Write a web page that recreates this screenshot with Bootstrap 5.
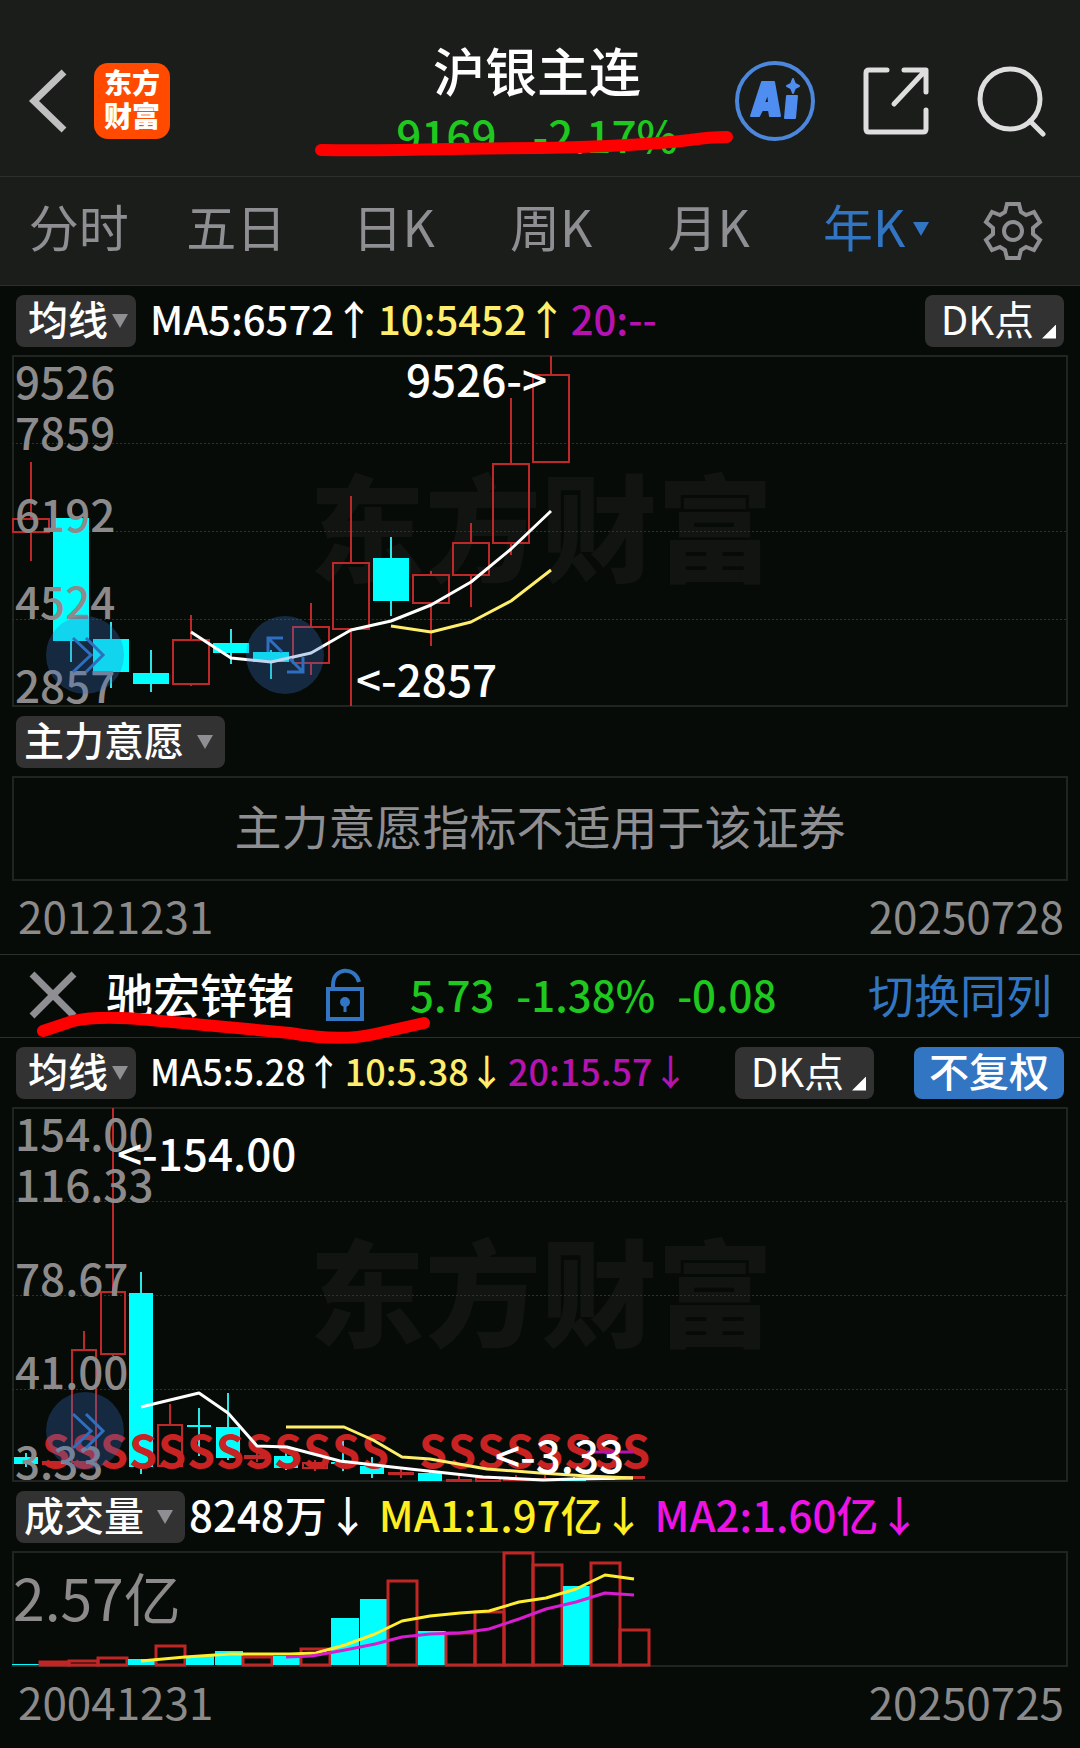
<!DOCTYPE html>
<html lang="zh-CN">
<head>
<meta charset="utf-8">
<meta name="viewport" content="width=device-width, initial-scale=1">
<title>沪银主连 - 年K</title>
<link href="https://cdn.jsdelivr.net/npm/bootstrap@5.3.0/dist/css/bootstrap.min.css" rel="stylesheet">
<style>
  :root { --page:#060b07; --bar:#1a1d1a; --rule:#2c2f2c; --frame:#212421; --muted:#8e8e93; --axis:#8c8a8a;
          --chip:#323232; --blue:#3275c3; --fall:#1fc81f; --gold:#ffee6b; --violet:#b612b0; }
  body { background:var(--page); color:#fff; font-family:"Noto Sans CJK SC","Noto Sans",sans-serif; line-height:1.2; }
  svg { display:block; }
  .bar { background:var(--bar); border-bottom:1px solid var(--rule); }
  .topbar { display:grid; grid-template-columns:1fr auto 1fr; align-items:center; height:177px; padding:25px 34px 0 28px; }
  .plain { background:none; border:0; padding:0; color:inherit; }
  .app-logo { width:76px; height:76px; margin-left:26px; border-radius:14px; background:#ff4a00; font-size:28px; line-height:33px; font-weight:900; padding-top:3px; }
  .app-logo span { display:block; text-align:center; }
  .share { margin:0 46px; }
  .quote-name { font-size:52px; line-height:60px; font-weight:500; margin:0; }
  .quote-block { padding-bottom:4px; }
  .quote-val { font-size:44px; line-height:48px; font-weight:500; color:var(--fall); gap:36px; margin-top:10px; white-space:nowrap; }
  .period { display:grid; grid-template-columns:repeat(6,1fr) 135px; align-items:center; height:109px; font-size:50px; line-height:60px; }
  .period a { color:var(--muted); text-decoration:none; text-align:center; padding-bottom:12px; }
  .period a.on { color:var(--blue); padding-left:20px; }
  .period .gearcell { color:var(--muted); }
  .tools { height:69px; padding:0 16px; white-space:nowrap; }
  .chip { height:52px; border:0; border-radius:8px; background:var(--chip); color:#fff; font-size:40px; line-height:48px; font-weight:500; padding:0 8px; display:flex; align-items:center; }
  .chip > span:first-child { padding-bottom:5px; }
  .chip.dk { font-weight:400; }
  .chip.adjust { background:var(--blue); padding:0 15px 5px; margin-left:40px; }
  .chip .wide { margin-right:13px; }
  .tri { width:0; height:0; border:8px solid transparent; border-top:14px solid currentColor; border-bottom:0; }
  .chip .tri { color:var(--muted); }
  .corner { width:14px; height:14px; background:#fff; clip-path:polygon(100% 0,100% 100%,0 100%); align-self:flex-end; margin-bottom:8px; }
  .ma { font-size:40px; font-weight:500; line-height:48px; gap:4px; padding-bottom:5px; margin-left:14px; }
  .ma.tight { font-size:36px; gap:3px; }
  .ma.vol { font-size:42px; gap:10px; margin-left:4px; }
  .gold { color:var(--gold); } .violet { color:var(--violet); }
  .yel { color:#ffee20; } .mag { color:#ee12e4; }
  .plot { padding:0 12px; }
  .plot svg { width:100%; height:auto; overflow:visible; }
  .notice { height:105px; margin:0 12px; padding-bottom:6px; border:2px solid var(--frame); color:var(--muted); font-size:47px; }
  .dates { height:73px; padding:0 16px 6px 18px; font-size:44px; line-height:48px; color:var(--axis); }
  .pair { height:84px; border-top:1px solid var(--rule); border-bottom:1px solid var(--rule); padding:0 28px 2px; }
  .pair .nm { font-size:47px; line-height:56px; font-weight:500; padding-bottom:4px; }
  .pair .num { font-size:42px; line-height:48px; font-weight:500; color:var(--fall); gap:22px; padding-bottom:3px; }
  .pair .lock { margin-right:42px; }
  .pair a { font-size:46px; line-height:56px; color:var(--blue); text-decoration:none; padding-bottom:4px; }
  .marker { position:absolute; left:0; top:0; width:100%; height:100%; overflow:visible; pointer-events:none; }
  .marker path { fill:none; stroke:#f00; stroke-width:12; stroke-linecap:round; stroke-linejoin:round; }
  .axis { font-size:44px; fill:var(--axis); font-weight:500; }
  .axis.big { font-size:57px; font-weight:400; }
  .note { font-size:44px; fill:#fff; font-weight:500; }
  .wm { font-size:116px; font-weight:900; fill:#111411; text-anchor:middle; }
  .sig { font-size:45px; font-weight:700; fill:#c92222; text-anchor:middle; }
  .grid-line { stroke:#2e312e; stroke-width:1; stroke-dasharray:2 2; }
  .outline { fill:none; stroke:var(--frame); stroke-width:2; }
  .up { fill:none; stroke:#bd2828; stroke-width:2; }
  .down { fill:#00ffff; stroke:#2ee5e5; stroke-width:2; }
  .down rect { stroke:none; }
  .line { fill:none; stroke-width:3; stroke-linejoin:round; }
  .pad { fill:rgba(56,112,200,.3); }
  .glyph { fill:none; stroke:#2f6fc0; stroke-width:3; }
</style>
</head>
<body>
<header class="bar topbar position-relative">
  <div class="d-flex align-items-center">
    <button class="plain" type="button" aria-label="返回">
      <svg width="40" height="64" viewBox="0 0 40 64" fill="none" stroke="#c0c0c0" stroke-width="7"><path d="M36 3 6 32l30 29"/></svg>
    </button>
    <div class="app-logo"><span>东方</span><span>财富</span></div>
  </div>
  <div class="quote-block d-flex flex-column align-items-center">
    <h1 class="quote-name">沪银主连</h1>
    <div class="quote-val d-flex"><span>9169</span><span>-2.17%</span></div>
  </div>
  <div class="d-flex align-items-center justify-content-end">
    <button class="plain" type="button" aria-label="Ai">
      <svg width="82" height="84" viewBox="0 0 82 84"><circle cx="41" cy="42" r="38" fill="none" stroke="#4d87dc" stroke-width="4"/>
        <g fill="#4f8df0" stroke="#4f8df0" stroke-width="2" stroke-linejoin="round"><path fill-rule="evenodd" d="M28 23h12l6 34h-10l-1-6h-7l-3 6h-8zm6 10-4 11h5z"/><path d="m53 37 10 0-2 22h-10zM59 20l2 5 4 2-4 2-2 5-2-5-4-2 4-2z"/></g></svg>
    </button>
    <button class="plain share" type="button" aria-label="分享">
      <svg width="68" height="70" viewBox="0 0 68 70" fill="none" stroke="#dedede" stroke-width="5" stroke-linecap="round" stroke-linejoin="round"><path d="M25 4H7Q4 4 4 7v56q0 3 3 3h54q3 0 3-3V44M42 4h22v22M62 6 32 38"/></svg>
    </button>
    <button class="plain" type="button" aria-label="搜索">
      <svg width="70" height="72" viewBox="0 0 70 72" fill="none" stroke="#dedede" stroke-width="5" stroke-linecap="round"><circle cx="34" cy="34" r="30"/><path d="m54 56 13 13"/></svg>
    </button>
  </div>
  <svg class="marker" viewBox="0 0 1080 176" aria-hidden="true"><path d="M321 150Q370 151 450 149L540 148Q640 146 690 140 710 137 727 137"/></svg>
</header>

<nav class="bar period">
  <a href="#">分时</a>
  <a href="#">五日</a>
  <a href="#">日K</a>
  <a href="#">周K</a>
  <a href="#">月K</a>
  <a class="on d-flex align-items-center justify-content-center" href="#">年K<span class="tri ms-2 mt-2"></span></a>
  <button class="plain gearcell d-flex justify-content-center" type="button" aria-label="设置">
    <svg width="60" height="60" viewBox="-30 -30 60 60" fill="none" stroke="currentColor" stroke-width="4"><circle cy="0" r="9"/>
      <path d="M-6-27H6L8-19 13-16 21-19 27-9 20-3V3L27 9 21 19 13 16 8 19 6 27H-6L-8 19-13 16-21 19-27 9-20 3V-3L-27-9-21-19-13-16-8-19Z"/></svg>
  </button>
</nav>

<main>
  <section>
    <div class="tools d-flex align-items-center">
      <button class="chip" type="button"><span class="ms-1 me-1">均线</span><span class="tri"></span></button>
      <div class="ma d-flex"><span>MA5:6572↑</span><span class="gold">10:5452↑</span><span class="violet">20:--</span></div>
      <button class="chip dk ms-auto" type="button"><span class="ms-1 me-2 ps-1">DK点</span><span class="corner"></span></button>
    </div>
    <div class="plot"><svg id="k1" viewBox="12 355 1056 352" role="img" aria-label="沪银主连年K线"></svg></div>
    <div class="tools d-flex align-items-center">
      <button class="chip" type="button"><span class="wide">主力意愿</span><span class="tri me-1"></span></button>
    </div>
    <div class="notice d-flex align-items-center justify-content-center">主力意愿指标不适用于该证券</div>
    <div class="dates d-flex align-items-center justify-content-between"><span>20121231</span><span>20250728</span></div>
  </section>

  <section>
    <div class="pair d-flex align-items-center position-relative">
      <button class="plain" type="button" aria-label="关闭"><svg width="50" height="50" viewBox="0 0 50 50" stroke="#8e8e93" stroke-width="7"><path d="m4 4 42 42M46 4 4 46"/></svg></button>
      <span class="nm ms-4 ps-1">驰宏锌锗</span>
      <svg class="lock ms-4" width="50" height="56" viewBox="0 0 50 56" fill="none" stroke="#3275c3" stroke-width="4"><path d="M10 22h34v30H10zM15 22v-4C15 0 37-1 41 15"/><circle cx="27" cy="35" r="5" fill="#3275c3" stroke="none"/><path d="M27 36v9" stroke-width="3"/></svg>
      <div class="num d-flex"><span>5.73</span><span>-1.38%</span><span>-0.08</span></div>
      <a class="ms-auto" href="#">切换同列</a>
      <svg class="marker" viewBox="0 955 1080 82" aria-hidden="true"><path d="M43 1031 73 1021Q100 1015 150 1020L290 1033Q340 1042 375 1034L424 1023"/></svg>
    </div>
    <div class="tools d-flex align-items-center">
      <button class="chip" type="button"><span class="ms-1 me-1">均线</span><span class="tri"></span></button>
      <div class="ma tight d-flex"><span>MA5:5.28↑</span><span class="gold">10:5.38↓</span><span class="violet">20:15.57↓</span></div>
      <button class="chip dk ms-auto" type="button"><span class="ms-1 me-2 ps-1">DK点</span><span class="corner"></span></button>
      <button class="chip adjust" type="button">不复权</button>
    </div>
    <div class="plot"><svg id="k2" viewBox="12 1107 1056 375" role="img" aria-label="驰宏锌锗年K线"></svg></div>
    <div class="tools d-flex align-items-center">
      <button class="chip" type="button"><span class="wide">成交量</span><span class="tri me-1"></span></button>
      <div class="ma vol d-flex"><span>8248万↓</span><span class="yel">MA1:1.97亿↓</span><span class="mag">MA2:1.60亿↓</span></div>
    </div>
    <div class="plot"><svg id="v2" viewBox="12 1552 1056 116" role="img" aria-label="成交量"></svg></div>
    <div class="dates d-flex align-items-center justify-content-between"><span>20041231</span><span>20250725</span></div>
  </section>
</main>

<script src="https://cdn.jsdelivr.net/npm/bootstrap@5.3.0/dist/js/bootstrap.bundle.min.js"></script>
<script>
// one candle: [rising, high, bodyTop, bodyBottom, low]
const candle = (x, w, [up, hi, top, bot, lo]) => up
  ? `<g class="up"><rect x="${x - w/2}" y="${top}" width="${w}" height="${Math.max(bot - top, 0.1)}"/><path d="M${x} ${hi}V${top}M${x} ${bot}V${lo}"/></g>`
  : `<g class="down"><path d="M${x} ${hi}V${lo}"/><rect x="${x - w/2}" y="${top}" width="${w}" height="${bot - top}"/></g>`;
const line = (pts, c) => `<polyline class="line" stroke="${c}" points="${pts}"/>`;
const grid = ys => ys.map(y => `<path class="grid-line" d="M12 ${y}H1068"/>`).join('');
const axis = rows => rows.map(([t, y]) => `<text class="axis" x="15" y="${y}">${t}</text>`).join('');
const chevrons = y => `<circle class="pad" cx="85" cy="${y}" r="39"/><path class="glyph" d="M73 ${y-17}l18 17-18 17M86 ${y-17}l17 17-17 17"/>`;

const k1 = [[1,462,519,532,561],[0,507,518,641,662],[0,622,639,672,688],[0,650,673,684,692],[1,615,640,684,686],
  [0,629,643,653,664],[0,650,652,662,679],[1,603,627,663,675],[1,496,563,629,706],[0,537,558,601,616],
  [1,571,575,603,646],[1,523,543,575,607],[1,398,464,543,555],[1,356,375,462,462]];
document.getElementById('k1').innerHTML =
  `<text class="wm" x="541" y="573">东方财富</text><rect class="outline" x="13" y="356" width="1054" height="350"/>` + grid([443.5,531.5,619.5]) +
  k1.map((c, i) => candle(31 + 40*i, 36, c)).join('') +
  line('191,632 231,658 271,662 311,653 351,630 391,621 431,605 471,582 511,549 551,511', '#fff') +
  line('391,626 431,632 471,622 511,601 551,570', '#ffee6b') +
  axis([['9526',399],['7859',450],['6192',532],['4524',619],['2857',703]]) +
  chevrons(655) + `<circle class="pad" cx="285" cy="655" r="39"/>
  <path class="glyph" d="M283 638H268V652M268 638l14 14M287 672H303V657M303 672l-13-13"/>
  <text class="note" x="547" y="397" text-anchor="end">9526-&gt;</text><text class="note" x="356" y="697">&lt;-2857</text>`;

const k2 = [[0,1453,1457,1464,1467],[1,1461,1462,1464,1465],[1,1331,1350,1462,1462],[1,1108,1292,1354,1356],[0,1272,1293,1467,1474],
  [1,1404,1425,1466,1466],[0,1408,1425,1427,1456],[0,1393,1427,1458,1460],[1,1450,1456,1458,1462],[0,1453,1456,1468,1470],
  [1,1460,1463,1468,1471],[0,1441,1462,1464,1471],[0,1457,1466,1474,1478],[1,1469,1473,1474,1478],[0,1472,1473,1481,1481],
  [1,1475,1480,1481,1481],[1,1477,1478,1481,1481],[1,1475,1479,1480,1480],[1,1475,1479,1480,1480],[0,1477,1479,1481,1481],
  [0,1476,1478,1480,1480],[1,1477,1477,1478,1478]];
const signals = [1,2,3,4,5,6,7,8,9,10,11,12,14,15,16,17,18,19,20,21];
document.getElementById('k2').innerHTML =
  `<text class="wm" x="541" y="1338">东方财富</text><rect class="outline" x="13" y="1108" width="1054" height="373"/>` + grid([1201.5,1295.5,1389.5]) +
  k2.map((c, i) => candle(Math.round(26 + 28.85*i), 24, c)).join('') +
  signals.map(i => `<text class="sig" x="${27 + 29*i}" y="1468">S</text>`).join('') +
  line('587,1452 633,1452', '#b612b0') +
  line('141,1407 199,1393 228,1413 257,1446 287,1447 340,1461 383,1466 437,1472 483,1477 543,1480 573,1479 633,1478', '#fff') +
  line('286,1427 344,1427 373,1440 402,1457 430,1459 487,1469 540,1473 587,1476 633,1478', '#ffee6b') +
  axis([['154.00',1151],['116.33',1202],['78.67',1296],['41.00',1389],['3.33',1479]]) + chevrons(1431) +
  `<text class="note" x="117" y="1171">&lt;-154.00</text><text class="note" x="495" y="1473">&lt;-3.33</text>`;

// volume bars: [rising, top]
const v2 = [[0,1665],[1,1663],[1,1662],[1,1659],[0,1660],[1,1647],[0,1657],[0,1652],[1,1658],[0,1657],[1,1650],[0,1619],[0,1600],
  [1,1582],[0,1632],[1,1634],[1,1613],[1,1554],[1,1566],[0,1587],[1,1564],[1,1631]];
document.getElementById('v2').innerHTML =
  `<rect class="outline" x="13" y="1553" width="1054" height="114"/>` +
  v2.map(([up, y], i) => up
    ? `<rect x="${11 + 29*i}" y="${y}" width="29" height="${1666 - y}" fill="none" stroke="#c02626" stroke-width="3"/>`
    : `<rect x="${12 + 29*i}" y="${y}" width="28" height="${1666 - y}" fill="#0ff"/>`).join('') +
  line('141,1662 185,1658 230,1655 290,1655 316,1654 345,1646 375,1635 402,1622 430,1617 460,1614 489,1612 519,1603 546,1599 576,1590 605,1576 634,1580', '#ffee30') +
  line('286,1658 312,1657 345,1651 375,1645 402,1638 430,1635 460,1634 489,1630 519,1620 546,1610 576,1603 605,1594 634,1596', '#d81cd0') +
  `<text class="axis big" x="13" y="1622">2.57亿</text>`;
</script>
</body>
</html>
